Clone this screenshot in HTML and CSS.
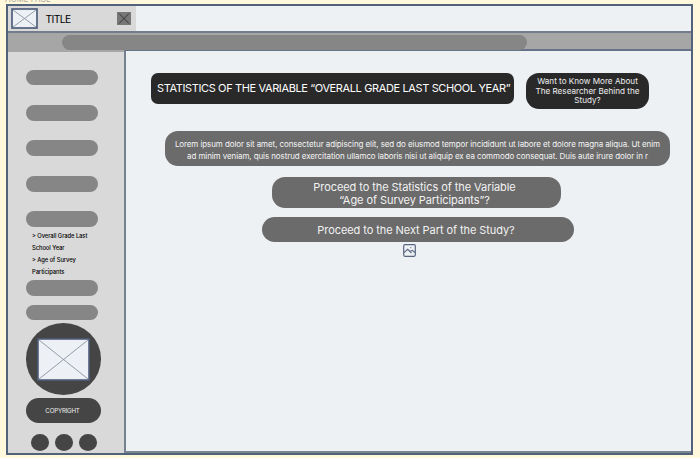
FILE: index.html
```html
<!DOCTYPE html>
<html lang="en">
<head>
<meta charset="utf-8">
<title>Home page</title>
<link rel="stylesheet" href="styles.css">
</head>
<body>
<div class="page-label">HOME PAGE</div>
<div class="window">
  <header class="tabs">
    <div class="tab">
      <svg class="thumb" width="27" height="21" viewBox="0 0 27 21"><rect x="1" y="1" width="25" height="19" fill="#edf1f5" stroke="#4f5e7b" stroke-width="1.7"/><path d="M2 2L25 19M25 2L2 19" stroke="#7f8899" stroke-width=".8"/></svg>
      <span class="tab-title">TITLE</span>
      <svg class="close" width="14" height="13" viewBox="0 0 14 13"><rect width="14" height="13" fill="#777"/><path d="M2 1.5L12 11.5M12 1.5L2 11.5" stroke="#333" stroke-width="1"/></svg>
    </div>
  </header>
  <div class="toolbar"><div class="address"></div></div>
  <div class="body">
    <aside class="sidebar">
      <div class="nav">
        <div class="pill"></div><div class="pill"></div><div class="pill"></div><div class="pill"></div><div class="pill"></div>
      </div>
      <div class="links">&gt; Overall Grade Last<br>School Year<br>&gt; Age of Survey<br>Participants</div>
      <div class="nav lower"><div class="pill"></div><div class="pill"></div></div>
      <div class="logo">
        <svg width="53" height="43" viewBox="0 0 53 43"><rect x="1" y="1" width="51" height="41" fill="#edf1f5" stroke="#4f5e7b" stroke-width="1.6"/><path d="M2 2L51 41M51 2L2 41" stroke="#8a90a0" stroke-width=".9"/></svg>
      </div>
      <div class="copyright"><span>COPYRIGHT</span></div>
      <div class="dots"><i></i><i></i><i></i></div>
    </aside>
    <main class="main">
      <div class="top">
        <h1 class="heading"><span>STATISTICS OF THE VARIABLE “OVERALL GRADE LAST SCHOOL YEAR”</span></h1>
        <div class="more"><div>Want to Know More About<br>The Researcher Behind the<br>Study?</div></div>
      </div>
      <div class="lorem"><div>Lorem ipsum dolor sit amet, consectetur adipiscing elit, sed do eiusmod tempor incididunt ut labore et dolore magna aliqua. Ut enim<br>ad minim veniam, quis nostrud exercitation ullamco laboris nisi ut aliquip ex ea commodo consequat. Duis aute irure dolor in r</div></div>
      <div class="button first"><div>Proceed to the Statistics of the Variable<br>“Age of Survey Participants”?</div></div>
      <div class="button second"><div>Proceed to the Next Part of the Study?</div></div>
      <svg class="picture" width="13" height="13" viewBox="0 0 13 13" fill="none" stroke="#596680"><rect x=".7" y=".7" width="11.6" height="11.6" rx="1.2" stroke-width="1.2"/><path d="M1 8.7L4.7 5.3L8.5 9M7 7.4L9.3 6.3L12 8.5" stroke-width="1.1"/><path d="M7.3 3.7h1" stroke-width="1"/></svg>
    </main>
  </div>
</div>
</body>
</html>
```
FILE: styles.css
```css
* { box-sizing: border-box; }
body {
  margin: 0;
  height: 458px;
  overflow: hidden;
  background: #fff8dd;
  font-family: Inter, "Liberation Sans", sans-serif;
  white-space: nowrap;
}
svg { display: block; flex: none; }
.page-label {
  height: 4px;
  padding-left: 5px;
  font-size: 7.8px;
  line-height: 10px;
  margin-top: -6px;
  margin-bottom: 6px;
  color: #aaa797;
}
.window {
  display: flex;
  flex-direction: column;
  width: 687px;
  height: 451px;
  margin-left: 6px;
  border: 2px solid #53627b;
  background: #edf1f4;
}
.tabs { height: 27px; border-bottom: 2px solid #737c8d; }
.tab {
  display: flex;
  align-items: center;
  width: 128px;
  height: 25px;
  padding-left: 3px;
  background: #d9d9d9;
}
.tab-title { width: 79px; padding-left: 7.5px; font-size: 10.3px; letter-spacing: -.6px; color: #000; }
.toolbar { height: 16px; background: #a6a6a6; padding: 2px 0 0 54px; }
.address {
  position: relative;
  width: 464.5px;
  height: 15px;
  border-radius: 8px;
  background: #868686;
}
.body { display: flex; flex: 1; min-height: 0; }
.sidebar {
  width: 116px;
  border-top: 3px solid #a6a6a6;
  padding: 17.5px 0 0 18px;
  background: #d9d9d9;
}
.nav { display: flex; flex-direction: column; gap: 19.8px; }
.pill { width: 72px; height: 15.7px; border-radius: 8px; background: #868686; }
.links {
  height: 47.4px;
  margin: 3.1px 0 2.3px 6px;
  font-size: 5.8px;
  font-weight: 500;
  line-height: 11.9px;
  letter-spacing: -.06px;
  color: #000;
}
.lower { gap: 9.2px; }
.logo {
  display: flex;
  align-items: center;
  justify-content: center;
  width: 75px;
  height: 71.5px;
  margin-top: 2.8px;
  border-radius: 50%;
  background: #454545;
}
.copyright {
  display: flex;
  align-items: center;
  justify-content: center;
  width: 75px;
  height: 25px;
  margin-top: 3.5px;
  padding-right: 2px;
  border-radius: 12.5px;
  background: #454545;
  color: #eee;
  font-size: 6.2px;
  letter-spacing: -.22px;
}
.dots { display: flex; gap: 6.3px; margin: 11px 0 0 4.5px; }
.dots i { width: 18px; height: 16.5px; border-radius: 50%; background: #454545; }
.main {
  display: flex;
  flex-direction: column;
  align-items: flex-start;
  flex: 1;
  border-top: 2px solid #66718a;
  border-left: 2px solid #758090;
  border-bottom: 2px solid #7b8491;
  padding-top: 22.4px;
}
.top { display: flex; align-items: flex-start; gap: 12px; margin-left: 25.2px; }
.heading, .more, .lorem, .button { display: flex; align-items: center; justify-content: center; text-align: center; }
.heading {
  width: 362.8px;
  height: 30.5px;
  margin: 0;
  padding: 0 0 1px 2px;
  border-radius: 7px;
  background: #292929;
  color: #fff;
  font-size: 11px;
  font-weight: 400;
  letter-spacing: -.375px;
}
.more {
  width: 123px;
  height: 35.2px;
  padding-top: 1px;
  border-radius: 13px;
  background: #292929;
  color: #eee;
  font-size: 8.15px;
  line-height: 9.7px;
}
.lorem {
  width: 504.5px;
  height: 34.8px;
  margin: 22.8px 0 0 39.2px;
  padding-top: 1.8px;
  border-radius: 13px;
  background: #6b6b6b;
  color: #f4f4f4;
  font-size: 8px;
  line-height: 12px;
  letter-spacing: -.093px;
}
.button {
  padding: 2px 3px 0 0;
  background: #6b6b6b;
  color: #f2f2f2;
  font-size: 11px;
  line-height: 13px;
  letter-spacing: -.07px;
}
.first { width: 289px; height: 31px; margin: 11.3px 0 0 145.5px; border-radius: 13px; }
.second { width: 312px; height: 25px; margin: 8.5px 0 0 135.5px; border-radius: 12.5px; }
.picture { margin: 1.7px 0 0 276.5px; }
```
